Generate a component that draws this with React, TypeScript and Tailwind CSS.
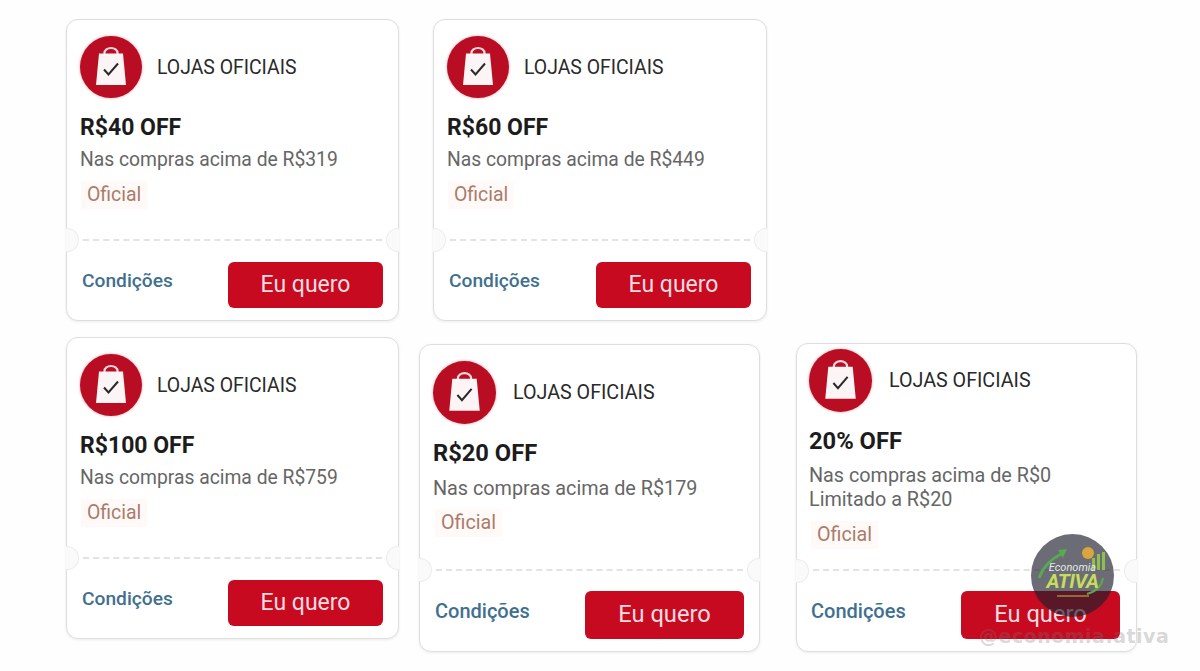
const font = { fontFamily: "Roboto, 'Liberation Sans', sans-serif" };

function BagIcon({ size }: { size: string }) {
  return (
    <div className={`${size} shrink-0 rounded-full bg-[#b80d22] flex items-center justify-center shadow-[0_0_3px_rgba(220,40,60,0.45)]`}>
      <svg viewBox="0 0 62 62" className="w-full h-full">
        <path d="M24.5 18 V17 a6.5 5 0 0 1 13 0 V18" fill="none" stroke="#f3d6da" strokeWidth="2.2" />
        <path d="M19 17.5 H43 L46 49 H16 Z" fill="#fdf5f5" />
        <path d="M24 33.5 L28.5 38.5 L38 27.5" fill="none" stroke="#2a2a2a" strokeWidth="2" />
      </svg>
    </div>
  );
}

function Notch({ side, top }: { side: "left" | "right"; top: string }) {
  return (
    <div
      className={`absolute ${top} ${
        side === "left"
          ? "-left-px rounded-r-full border-l-0"
          : "-right-px rounded-l-full border-r-0"
      } w-[13px] h-[24px] bg-[#fafafa] border border-[#ececec]`}
    />
  );
}

type CouponProps = {
  big?: boolean;
  off: string;
  min: string;
  limit?: string;
  className: string;
  headPad: string;
  offMargin: string;
  minMargin: string;
  tagMargin: string;
  dashTop: string;
  footPad: string;
  btnWidth: string;
};

function Coupon({ big, off, min, limit, className, headPad, offMargin, minMargin, tagMargin, dashTop, footPad, btnWidth }: CouponProps) {
  return (
    <div className={`relative flex flex-col bg-white rounded-[12px] border border-[#dedede] shadow-[0_1px_3px_rgba(0,0,0,0.08)] ${className}`}>
      <div className={`flex-1 ${headPad}`}>
        <div className="flex items-center">
          <BagIcon size={big ? "w-[63px] h-[63px]" : "w-[62px] h-[62px]"} />
          <span className={big ? "ml-[17px] text-[19.7px] text-[#2a2a2a]" : "ml-[15px] text-[19.4px] text-[#2a2a2a] mt-[1px]"}>LOJAS OFICIAIS</span>
        </div>
        <div className={`${offMargin} leading-[28px] font-bold text-[#1c1c1c] ${big ? "text-[23.7px]" : "text-[23px]"}`}>{off}</div>
        <div className={`${minMargin} leading-[24px] text-[#666666] ${big ? "text-[19.8px]" : "text-[19.3px]"}`}>{min}</div>
        {limit && <div className="leading-[24px] text-[#666666] text-[19.8px]">{limit}</div>}
        <div className={`${tagMargin} w-fit px-[6px] leading-[28px] bg-[#fffaf7] text-[#ab7b6c] ${big ? "ml-[2px] text-[19.7px]" : "ml-[1px] text-[19.4px]"}`}>Oficial</div>
      </div>
      <Notch side="left" top={dashTop} />
      <Notch side="right" top={dashTop} />
      <div className="mx-[16px] border-t-2 border-dashed border-[#e3e3e3]" />
      <div className={`flex items-start justify-between ${footPad}`}>
        <span className={`font-medium text-[#41708f] ${big ? "text-[20px] mt-[5px]" : "text-[19.2px] mt-[5px]"}`}>Condições</span>
        <button className={`${btnWidth} rounded-[6px] bg-[#c70a1f] text-[#fbdce0] ${big ? "h-[48px] text-[23.7px]" : "h-[46px] text-[23px]"}`}>Eu quero</button>
      </div>
    </div>
  );
}

export default function App() {
  const small = {
    className: "w-[333px] h-[302px]",
    headPad: "pt-[16px] px-[13px]",
    offMargin: "mt-[16px]",
    minMargin: "mt-[6px]",
    tagMargin: "mt-[9px]",
    dashTop: "top-[208px]",
    footPad: "pt-[21px] pb-[12px] px-[15px]",
    btnWidth: "w-[155px]",
  };
  const big = {
    big: true,
    className: "w-[341px] h-[308px]",
    headPad: "pt-[16px] px-[13px]",
    offMargin: "mt-[15px]",
    minMargin: "mt-[10px]",
    tagMargin: "mt-[8px]",
    dashTop: "top-[213px]",
    footPad: "pt-[20px] pb-[12px] px-[15px]",
    btnWidth: "w-[159px]",
  };

  return (
    <div className="relative w-[1200px] h-[671px] overflow-hidden bg-[#fefefe]" style={font}>
      <div className="flex gap-[34px] pt-[19px] pl-[66px]">
        <Coupon {...small} off="R$40 OFF" min="Nas compras acima de R$319" />
        <Coupon {...small} className="w-[334px] h-[302px]" off="R$60 OFF" min="Nas compras acima de R$449" />
      </div>
      <div className="flex items-start pl-[66px] mt-[16px]">
        <Coupon {...small} off="R$100 OFF" min="Nas compras acima de R$759" />
        <Coupon {...big} className="w-[341px] h-[308px] mt-[7px] ml-[20px]" off="R$20 OFF" min="Nas compras acima de R$179" />
        <Coupon
          {...big}
          className="w-[341px] h-[309px] mt-[6px] ml-[36px]"
          headPad="pt-[5px] px-[12px]"
          offMargin="mt-[15px]"
          minMargin="mt-[9px]"
          tagMargin="mt-[9px]"
          dashTop="top-[215px]"
          footPad="pt-[20px] pb-[12px] pl-[14px] pr-[16px]"
          off="20% OFF"
          min="Nas compras acima de R$0"
          limit="Limitado a R$20"
        />
      </div>

      {/* watermark */}
      <div className="absolute left-[1031px] top-[534px] w-[83px] h-[83px] rounded-full bg-[rgba(30,32,45,0.66)] flex flex-col items-center justify-center">
        <svg viewBox="0 0 83 83" className="absolute inset-0">
          <path d="M8 44 Q14 28 30 20" fill="none" stroke="#5aa84f" strokeWidth="3" />
          <path d="M27 16 L36 15 L32 24 Z" fill="#5aa84f" />
          <rect x="61" y="24" width="3" height="12" fill="#8fbf4d" />
          <rect x="66" y="20" width="3" height="16" fill="#8fbf4d" />
          <rect x="71" y="18" width="3" height="18" fill="#8fbf4d" />
          <circle cx="57" cy="19" r="6" fill="#d9a63e" />
          <path d="M72 44 Q70 56 56 60" fill="none" stroke="#5aa84f" strokeWidth="2" />
          <path d="M26 62 H58" stroke="#a5873a" strokeWidth="1.5" />
        </svg>
        <span className="relative text-[11px] leading-[11px] italic text-[#e4ebe6]">Economia</span>
        <span className="relative text-[20px] leading-[17px] font-bold italic tracking-[-0.5px] text-[#c6dc5c]">ATIVA</span>
      </div>
      <div className="absolute left-[979px] top-[624px] text-[19px] leading-[24px] font-bold tracking-[0.5px] text-[rgba(120,120,120,0.3)]" style={{ fontFamily: "'DejaVu Sans', sans-serif" }}>
        @economia.ativa
      </div>
    </div>
  );
}
